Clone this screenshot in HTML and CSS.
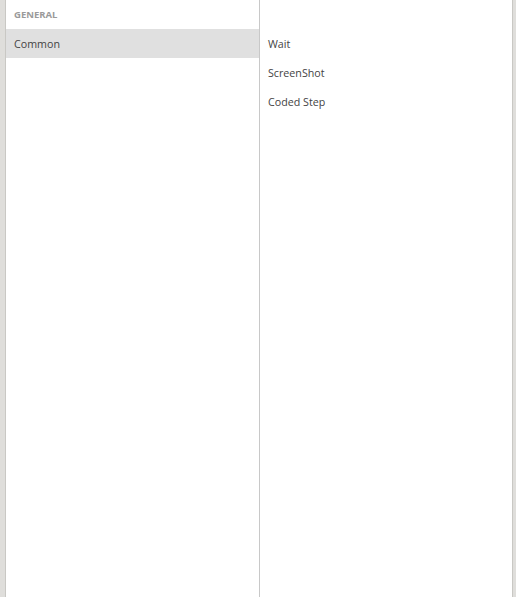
FILE: index.html
```html
<!DOCTYPE html>
<html>
<head>
    <meta charset="utf-8">
    <title>Steps</title>
    <link rel="stylesheet" href="styles.css">
</head>
<body>
<div class="frame">
    <div class="panel">
        <div class="categories">
            <div class="groupTitle">General</div>
            <ul class="list">
                <li class="selected">Common</li>
            </ul>
        </div>
        <div class="steps">
            <ul class="list">
                <li>Wait</li>
                <li>ScreenShot</li>
                <li>Coded Step</li>
            </ul>
        </div>
    </div>
</div>
</body>
</html>
```

FILE: styles.css
```css
* {
    font-family: "Open Sans", "Noto Sans", sans-serif;
}

html, body {
    height: 100%;
    margin: 0;
}

.frame {
    height: 100%;
    box-sizing: border-box;
    background: #dfdedb;
    padding: 0 3px 0 5px;
}

.panel {
    display: flex;
    height: 100%;
    background: #fff;
    border-left: 1px solid #c9c8c4;
    border-right: 1px solid #c9c8c4;
    box-sizing: border-box;
}

.categories {
    width: 253px;
    border-right: 1px solid #c8c8c8;
}

.steps {
    flex: 1;
    padding-top: 29px;
}

.groupTitle {
    height: 29px;
    line-height: 29px;
    padding-left: 8px;
    font-size: 9.5px;
    font-weight: bold;
    text-transform: uppercase;
    color: #9a9a9a;
}

.list {
    margin: 0;
    padding: 0;
    list-style: none;
}

.list li {
    height: 29px;
    line-height: 30px;
    overflow: hidden;
    padding-left: 8px;
    font-size: 10.7px;
    color: #444;
}

.list li.selected {
    background: #e0e0e0;
}
```
